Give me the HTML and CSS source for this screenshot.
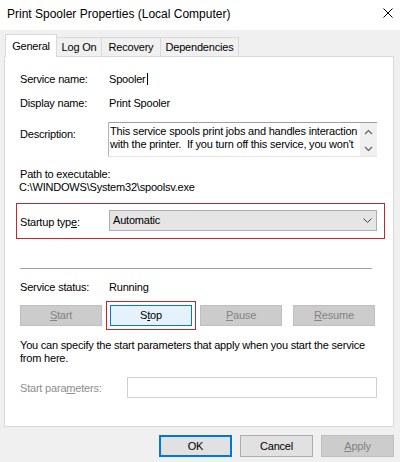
FILE: index.html
```html
<!DOCTYPE html>
<html lang="en">
<head>
<meta charset="utf-8">
<title>Print Spooler Properties (Local Computer)</title>
<link rel="stylesheet" href="styles.css">
</head>
<body>
<div class="window">
  <div class="titlebar">
    <span class="title">Print Spooler Properties (Local Computer)</span>
    <svg class="close" width="10" height="10" viewBox="0 0 10 10"><path d="M0.5 0.5 L9.5 9.5 M9.5 0.5 L0.5 9.5" stroke="#000" stroke-width="1" fill="none"/></svg>
  </div>
  <div class="tabs">
    <div class="tab active t-general">General</div>
    <div class="tab t-logon">Log On</div>
    <div class="tab t-recovery">Recovery</div>
    <div class="tab t-deps">Dependencies</div>
  </div>
  <div class="panel">
    <div class="row r-name"><span class="label">Service name:</span><span class="value">Spooler<span class="caret"></span></span></div>
    <div class="row r-display"><span class="label">Display name:</span><span class="value">Print Spooler</span></div>
    <div class="r-desc">
      <span class="label">Description:</span>
      <div class="desc">
        <div class="desc-text">This service spools print jobs and handles interaction<br>with the printer.&nbsp; If you turn off this service, you won't</div>
        <div class="scroll">
          <svg width="9" height="6" viewBox="0 0 9 6"><path d="M1 5 L4.5 1.5 L8 5" stroke="#606060" stroke-width="1.2" fill="none"/></svg>
          <svg width="9" height="6" viewBox="0 0 9 6"><path d="M1 1 L4.5 4.5 L8 1" stroke="#606060" stroke-width="1.2" fill="none"/></svg>
        </div>
      </div>
    </div>
    <div class="path">
      <div>Path to executable:</div>
      <div class="path-value">C:\WINDOWS\System32\spoolsv.exe</div>
    </div>
    <div class="startup">
      <span class="label">Startup typ<u>e</u>:</span>
      <div class="combo"><span>Automatic</span><svg width="9" height="5" viewBox="0 0 9 5"><path d="M0.5 0.5 L4.5 4.5 L8.5 0.5" stroke="#404040" stroke-width="1" fill="none"/></svg></div>
    </div>
    <div class="sep"></div>
    <div class="row r-status"><span class="label">Service status:</span><span class="value">Running</span></div>
    <div class="svc-buttons">
      <div class="btn disabled"><u>S</u>tart</div>
      <div class="btn stop">S<u>t</u>op</div>
      <div class="btn disabled"><u>P</u>ause</div>
      <div class="btn disabled resume"><u>R</u>esume</div>
    </div>
    <p class="note">You can specify the start parameters that apply when you start the service<br>from here.</p>
    <div class="params">
      <span class="label dim">Start para<u>m</u>eters:</span>
      <div class="input"></div>
    </div>
  </div>
  <div class="footer">
    <div class="fbtn ok">OK</div>
    <div class="fbtn">Cancel</div>
    <div class="fbtn disabled"><u>A</u>pply</div>
  </div>
</div>
</body>
</html>
```
FILE: styles.css
```css
html, body {
  margin: 0;
  padding: 0;
}
body {
  background: #f0f0f0;
  font-family: "Liberation Sans", Arial, sans-serif;
  font-size: 11px;
  letter-spacing: -0.2px;
  color: #000;
}
.window {
  width: 400px;
  height: 462px;
  display: flex;
  flex-direction: column;
  overflow: hidden;
}
.titlebar {
  height: 30px;
  flex: none;
  background: #fff;
  display: flex;
  align-items: center;
  justify-content: space-between;
  padding: 0 7px 0 7px;
  box-sizing: border-box;
}
.title {
  font-size: 12px;
  letter-spacing: 0;
  line-height: 16px;
  margin-top: -2px;
}
.close {
  margin-top: -4px;
}
.tabs {
  height: 26px;
  flex: none;
  display: flex;
  align-items: flex-end;
  padding-left: 5px;
  box-sizing: border-box;
}
.tab {
  height: 19px;
  flex: none;
  box-sizing: border-box;
  border: 1px solid #d9d9d9;
  border-bottom: none;
  margin-left: -1px;
  display: flex;
  align-items: center;
  justify-content: center;
  line-height: 16px;
  background: #f0f0f0;
}
.tab.active {
  height: 23px;
  margin-bottom: -1px;
  margin-left: 0;
  background: #fff;
  position: relative;
  z-index: 1;
}
.t-general { width: 52px; }
.t-logon { width: 46px; }
.t-recovery { width: 60px; }
.t-deps { width: 79px; }
.panel {
  margin-left: 4px;
  width: 390px;
  height: 371px;
  flex: none;
  box-sizing: border-box;
  border: 1px solid #d9d9d9;
  background: #fff;
  padding: 0 16px 0 15px;
  display: flex;
  flex-direction: column;
}
.row {
  display: flex;
  height: 16px;
  line-height: 16px;
  flex: none;
}
.label {
  width: 89px;
  flex: none;
}
.caret {
  display: inline-block;
  width: 1px;
  height: 12px;
  margin-left: 1px;
  background: #000;
  vertical-align: -2px;
}
.r-name { margin-top: 14px; }
.r-display { margin-top: 8px; }
.r-desc {
  margin-top: 11px;
  display: flex;
  flex: none;
}
.r-desc .label {
  padding-top: 4px;
  line-height: 16px;
}
.desc {
  flex: 1;
  min-width: 0;
  height: 35px;
  margin-left: -1px;
  box-sizing: border-box;
  border-top: 1px solid #a0a0a0;
  border-left: 1px solid #b4b4b4;
  border-bottom: 1px solid #e6e6e6;
  display: flex;
}
.desc-text {
  flex: 1;
  min-width: 0;
  padding: 2px 0 0 1px;
  line-height: 13px;
  white-space: nowrap;
  overflow: hidden;
}
.scroll {
  width: 17px;
  flex: none;
  background: #f0f0f0;
  display: flex;
  flex-direction: column;
  justify-content: space-between;
  align-items: center;
  padding: 6px 0 4px;
  box-sizing: border-box;
}
.path {
  margin-top: 11px;
  line-height: 13px;
  flex: none;
}
.path-value {
  margin-left: -1px;
}
.startup {
  margin-top: 9px;
  margin-left: -4px;
  margin-right: -8px;
  height: 36px;
  flex: none;
  box-sizing: border-box;
  border: 1px solid #c1272d;
  padding: 6px 7px 0 3px;
  display: flex;
  align-items: flex-start;
}
.startup .label {
  line-height: 24px;
}
.combo {
  flex: 1;
  height: 21px;
  box-sizing: border-box;
  background: #e5e5e5;
  border: 1px solid #adadad;
  display: flex;
  align-items: center;
  justify-content: space-between;
  padding: 0 4px 0 3px;
  line-height: 19px;
}
.sep {
  margin-top: 29px;
  height: 1px;
  width: 352px;
  background: #a0a0a0;
  flex: none;
}
.r-status { margin-top: 10px; }
.svc-buttons {
  margin-top: 10px;
  display: flex;
  gap: 8px;
  height: 21px;
  flex: none;
}
.btn {
  width: 82px;
  height: 21px;
  flex: none;
  box-sizing: border-box;
  border: 1px solid #adadad;
  background: #e1e1e1;
  line-height: 19px;
  text-align: center;
}
.btn.disabled {
  background: #cccccc;
  border-color: #bfbfbf;
  color: #838383;
}
.btn.stop {
  background: #e5f1fb;
  border-color: #0078d7;
  outline: 1px solid #c1272d;
  outline-offset: 3px;
}
.btn.resume {
  margin-left: 3px;
}
.note {
  margin: 13px 0 0;
  line-height: 13px;
  flex: none;
}
.params {
  margin-top: 12px;
  display: flex;
  align-items: center;
  height: 21px;
  flex: none;
}
.params .label {
  width: 107px;
}
.dim {
  color: #8d8d8d;
}
.input {
  flex: 1;
  height: 21px;
  box-sizing: border-box;
  border: 1px solid #d0d0d0;
  background: #fff;
}
.footer {
  display: flex;
  justify-content: flex-end;
  gap: 8px;
  padding: 8px 6px 0 0;
}
.fbtn {
  width: 73px;
  height: 22px;
  box-sizing: border-box;
  border: 1px solid #adadad;
  background: #e1e1e1;
  line-height: 20px;
  text-align: center;
}
.fbtn.ok {
  border: 2px solid #0078d7;
  line-height: 18px;
}
.fbtn.disabled {
  background: #cccccc;
  border-color: #bfbfbf;
  color: #838383;
}
```
